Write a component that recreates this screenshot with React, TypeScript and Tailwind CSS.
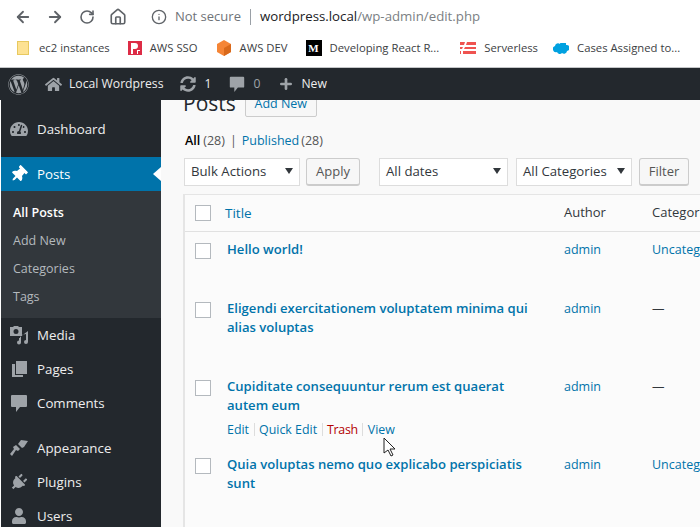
import { ArrowLeft, ArrowRight, Home, Info, Plus, RotateCw } from "lucide-react";
import { FaHome, FaPlug, FaSyncAlt, FaTachometerAlt, FaThumbtack, FaUser, FaWordpress } from "react-icons/fa";
import { ReactNode } from "react";

const font = "font-['Open_Sans',sans-serif]";

const CommentIcon = ({ className }: { className?: string }) => (
  <svg viewBox="0 0 20 20" className={className} fill="currentColor">
    <path d="M3 2h14a1 1 0 0 1 1 1v10a1 1 0 0 1-1 1h-6l-4 5v-5H3a1 1 0 0 1-1-1V3a1 1 0 0 1 1-1z" />
  </svg>
);

const MediaIcon = () => (
  <svg viewBox="0 0 20 20" className="w-5 h-5" fill="currentColor">
    <path d="M1 2h3l1-1h4l1 1h3v9H1z M7 4a2.500 2.500 0 1 0 0 5a2.500 2.500 0 0 0 0-5z" fillRule="evenodd" />
    <path d="M19 6v11a2 2 0 1 1-2-2V9l-5 1v7.500a2 2 0 1 1-2-2V13h1v-1l8-6z" />
  </svg>
);

const PagesIcon = () => (
  <svg viewBox="0 0 20 20" className="w-5 h-5" fill="currentColor">
    <path d="M7 2h11v13H7z" />
    <path d="M3 5h3v11h8v2H3z" />
  </svg>
);

const BrushIcon = () => (
  <svg viewBox="0 0 20 20" className="w-5 h-5" fill="currentColor">
    <path d="M12 2l7 1-4 6-2 1-4-4z" />
    <path d="M7 7l4 4-2 2-2-1-4 6-2-2 4-5-1-2z" />
  </svg>
);

const SideItem = ({ icon, label }: { icon: ReactNode; label: string }) => (
  <div className="flex items-center h-[34px] shrink-0 text-[#eeeeee]">
    <span className="w-[36px] flex justify-center pr-[1px] text-[#9ea3a8]">{icon}</span>
    <span className="pt-[2px]">{label}</span>
  </div>
);

const Bookmark = ({ icon, label, className = "gap-[8px]" }: { icon: ReactNode; label: string; className?: string }) => (
  <div className={`flex items-center ${className}`}>
    {icon}
    <span>{label}</span>
  </div>
);

const FakeSelect = ({ label, width }: { label: string; width: string }) => (
  <div className={`${width} h-[28px] bg-white border border-[#dddddd] flex items-center justify-between pl-[6px] pr-[6px] text-[13.2px] text-[#32373c]`}>
    <span>{label}</span>
    <span className="w-0 h-0 border-x-[4px] border-x-transparent border-t-[6px] border-t-[#32373c] -mt-[2px]" />
  </div>
);

const FakeButton = ({ label, width }: { label: string; width: string }) => (
  <div className={`${width} h-[28px] bg-[#f7f7f7] border border-[#cccccc] border-b-2 rounded-[3px] flex items-center justify-center text-[#555555]`}>
    {label}
  </div>
);

const CheckBox = () => <div className="w-4 h-4 bg-white border border-[#b4b9be] shrink-0" />;

const Sep = () => <span className="mx-[4.5px] w-px h-[13px] bg-[#dddddd]" />;

const PostRow = ({ lines, category, height, actions }: { lines: string[]; category: string; height: string; actions?: boolean }) => (
  <div className={`flex ${height} bg-[#fbfbfb]`}>
    <div className="w-[42px] pl-[10px] pt-[11px]"><CheckBox /></div>
    <div className="w-[337px] pt-[8px]">
      <div className="text-[#0073aa] font-semibold text-[13.1px] leading-[19px]">
        {lines.map((line) => <div key={line}>{line}</div>)}
      </div>
      {actions && (
        <div className="flex items-center mt-[5px] text-[12.4px] leading-[19px] text-[#0073aa]">
          <span>Edit</span><Sep />
          <span>Quick Edit</span><Sep />
          <span className="text-[#b30000] tracking-[-0.3px]">Trash</span><Sep />
          <span>View</span>
        </div>
      )}
    </div>
    <div className="w-[88px] pt-[8px] text-[#0073aa] text-[12.5px] leading-[19px]">admin</div>
    <div className={`pt-[8px] text-[12.5px] leading-[19px] whitespace-nowrap ${category === "—" ? "text-[#32373c]" : "text-[#0073aa]"}`}>{category}</div>
  </div>
);

export default function App() {
  return (
    <div className={`w-[700px] h-[527px] overflow-hidden flex flex-col relative bg-white ${font}`}>
      {/* browser chrome */}
      <div className="h-[33px] flex items-center text-[#5f6368] shrink-0">
        <ArrowLeft strokeWidth={2.4} className="w-[18px] h-[18px] ml-[14px]" />
        <ArrowRight strokeWidth={2.4} className="w-[18px] h-[18px] ml-[14px]" />
        <RotateCw strokeWidth={2.4} className="w-[16px] h-[16px] ml-[15px]" />
        <Home strokeWidth={2.2} className="w-[18px] h-[18px] ml-[14px]" />
        <Info className="w-[16px] h-[16px] ml-[24px]" />
        <span className="ml-[8px] text-[13px] text-[#6f7378]">Not secure</span>
        <span className="ml-[9px] h-[16px] w-px bg-[#9aa0a6]" />
        <span className="ml-[9px] text-[13.25px] text-[#202124]">wordpress.local<span className="text-[#7b7f84]">/wp-admin/edit.php</span></span>
      </div>
      <div className="h-[35px] flex items-center gap-[18px] pl-[17px] pb-[4px] text-[11.3px] text-[#3c4043] border-b border-[#c4c6c8] shrink-0 whitespace-nowrap">
        <Bookmark label="ec2 instances" className="gap-[10px]" icon={<div className="w-[12px] h-[14px] bg-[#fde293] border border-[#e8c95f]" />} />
        <Bookmark label="AWS SSO" icon={
          <svg viewBox="0 0 14 14" className="w-[14px] h-[14px]"><path fill="#dd2c46" d="M0 0h14v14H0z" /><path fill="#fff" d="M3 2h4a2.500 2.500 0 0 1 0 6H5v5H3z M9 9h3v1h-2v3H9z" /></svg>
        } />
        <Bookmark label="AWS DEV" icon={
          <svg viewBox="0 0 16 16" className="w-[16px] h-[16px]"><path fill="#f58536" d="M8 0l7 4v8l-7 4-7-4V4z" /><path fill="#d9691b" d="M8 8l7-4v8l-7 4z" /></svg>
        } />
        <Bookmark label="Developing React R..." className="gap-[8px] pr-[3px]" icon={
          <div className="w-[16px] h-[16px] bg-black text-white text-[11px] leading-[16px] text-center font-bold font-['Liberation_Serif',serif]">M</div>
        } />
        <Bookmark label="Serverless" className="gap-[8px] -mr-[3px]" icon={
          <svg viewBox="0 0 16 12" className="w-[16px] h-[12px]"><path fill="#ef5350" d="M0 0h5l-1 3H0z M7 0h9v3H6z M0 5h3l-1 2H0z M5 5h11v2H4z M0 9h1v3H0z M3 9h13v3H3z" /></svg>
        } />
        <Bookmark label="Cases Assigned to..." icon={
          <svg viewBox="0 0 16 11" className="w-[16px] h-[11px]"><path fill="#00a1e0" d="M2 3a3 3 0 0 1 5-2a3 3 0 0 1 6 1a3 3 0 0 1 1 6a3 3 0 0 1-5 2a3 3 0 0 1-5-1a3 3 0 0 1-2-6z" /></svg>
        } />
      </div>
      {/* admin bar */}
      <div className="h-[32px] bg-[#23282d] flex items-center text-[12.2px] text-[#eeeeee] shrink-0 z-10 whitespace-nowrap">
        <FaWordpress className="w-[21px] h-[21px] ml-[8px] text-[#9ea3a8]" />
        <FaHome className="w-[17px] h-[17px] ml-[16px] text-[#9ea3a8]" />
        <span className="ml-[7px]">Local Wordpress</span>
        <FaSyncAlt className="w-[16px] h-[16px] ml-[17px] text-[#9ea3a8]" />
        <span className="ml-[8px]">1</span>
        <CommentIcon className="w-[18px] h-[18px] ml-[17px] text-[#9ea3a8]" />
        <span className="ml-[7px] text-[#9ea3a8]">0</span>
        <Plus strokeWidth={4} className="w-[16px] h-[16px] ml-[18px] text-[#9ea3a8]" />
        <span className="ml-[7px]">New</span>
      </div>
      <div className="flex flex-1 min-h-0">
        {/* sidebar */}
        <div className="w-[161px] shrink-0 border-l border-white bg-[#23282d] text-[13.3px] flex flex-col pt-[12px] whitespace-nowrap overflow-hidden">
          <SideItem label="Dashboard" icon={<FaTachometerAlt className="w-[18px] h-[18px]" />} />
          <div className="h-[11px] shrink-0" />
          <div className="relative shrink-0">
            <div className="flex items-center h-[34px] bg-[#0073aa] text-white">
              <span className="w-[36px] flex justify-center pr-[1px]"><FaThumbtack className="w-[17px] h-[17px] rotate-45" /></span>
              <span className="pt-[2px]">Posts</span>
            </div>
            <span className="absolute right-0 top-[10px] w-0 h-0 border-y-[7px] border-y-transparent border-r-[8px] border-r-white" />
          </div>
          <div className="h-[127px] shrink-0 bg-[#32373c] text-[12.5px] text-[#b4b9be] pl-[12px] pt-[8px] flex flex-col">
            <div className="h-[28px] flex items-center text-white font-semibold">All Posts</div>
            <div className="h-[28px] flex items-center">Add New</div>
            <div className="h-[28px] flex items-center">Categories</div>
            <div className="h-[28px] flex items-center">Tags</div>
          </div>
          <SideItem label="Media" icon={<MediaIcon />} />
          <SideItem label="Pages" icon={<PagesIcon />} />
          <SideItem label="Comments" icon={<CommentIcon className="w-5 h-5" />} />
          <div className="h-[11px] shrink-0" />
          <SideItem label="Appearance" icon={<BrushIcon />} />
          <SideItem label="Plugins" icon={<FaPlug className="w-[17px] h-[17px] rotate-45" />} />
          <SideItem label="Users" icon={<FaUser className="w-[16px] h-[16px]" />} />
        </div>
        {/* content */}
        <div className="flex-1 min-w-0 bg-[#f9f9f9] pl-[22px] text-[13px] whitespace-nowrap overflow-hidden">
          <div className="flex items-center -mt-[10px] h-[28px]">
            <span className="text-[21px] text-[#23282d]">Posts</span>
            <span className="ml-[9px] h-[25px] w-[72px] justify-center border border-[#cccccc] rounded-[2px] bg-[#f7f7f7] text-[#0073aa] text-[12.5px] flex items-center">Add New</span>
          </div>
          <div className="mt-[13px] ml-[2px] h-[19px] leading-[19px] text-[12.5px] text-[#555555] flex">
            <span className="text-black font-semibold">All</span>
            <span className="ml-[3px]">(28)</span>
            <span className="mx-[5px]">|</span>
            <span className="text-[#0073aa]">Published</span>
            <span className="ml-[2px]">(28)</span>
          </div>
          <div className="flex mt-[8px] ml-[1px]">
            <FakeSelect label="Bulk Actions" width="w-[116px]" />
            <div className="ml-[6px]"><FakeButton label="Apply" width="w-[54px]" /></div>
            <div className="ml-[19px]"><FakeSelect label="All dates" width="w-[129px]" /></div>
            <div className="ml-[8px]"><FakeSelect label="All Categories" width="w-[116px]" /></div>
            <div className="ml-[7px]"><FakeButton label="Filter" width="w-[50px]" /></div>
          </div>
          <div className="mt-[8px] w-[600px] border border-[#e5e5e5] border-l-[2px]">
            <div className="flex h-[37px] items-center border-b border-[#e1e1e1] bg-[#fbfbfb]">
              <div className="w-[40px] pl-[10px]"><CheckBox /></div>
              <div className="w-[339px] text-[#0073aa] text-[13.5px]">Title</div>
              <div className="w-[88px] text-[#32373c] text-[13px]">Author</div>
              <div className="text-[#32373c] text-[13px]">Categories</div>
            </div>
            <PostRow lines={["Hello world!"]} category="Uncategorized" height="h-[59px]" />
            <PostRow lines={["Eligendi exercitationem voluptatem minima qui", "alias voluptas"]} category="—" height="h-[78px]" />
            <PostRow lines={["Cupiditate consequuntur rerum est quaerat", "autem eum"]} category="—" height="h-[78px]" actions />
            <PostRow lines={["Quia voluptas nemo quo explicabo perspiciatis", "sunt"]} category="Uncategorized" height="h-[100px]" />
          </div>
        </div>
      </div>
      {/* mouse pointer */}
      <svg viewBox="0 0 14 20" className="absolute left-[383px] top-[437px] w-[14px] h-[20px]">
        <path d="M1 1v15l4-3 3 6 2-1-3-6h5z" fill="#fff" stroke="#222" strokeWidth="1" />
      </svg>
    </div>
  );
}
